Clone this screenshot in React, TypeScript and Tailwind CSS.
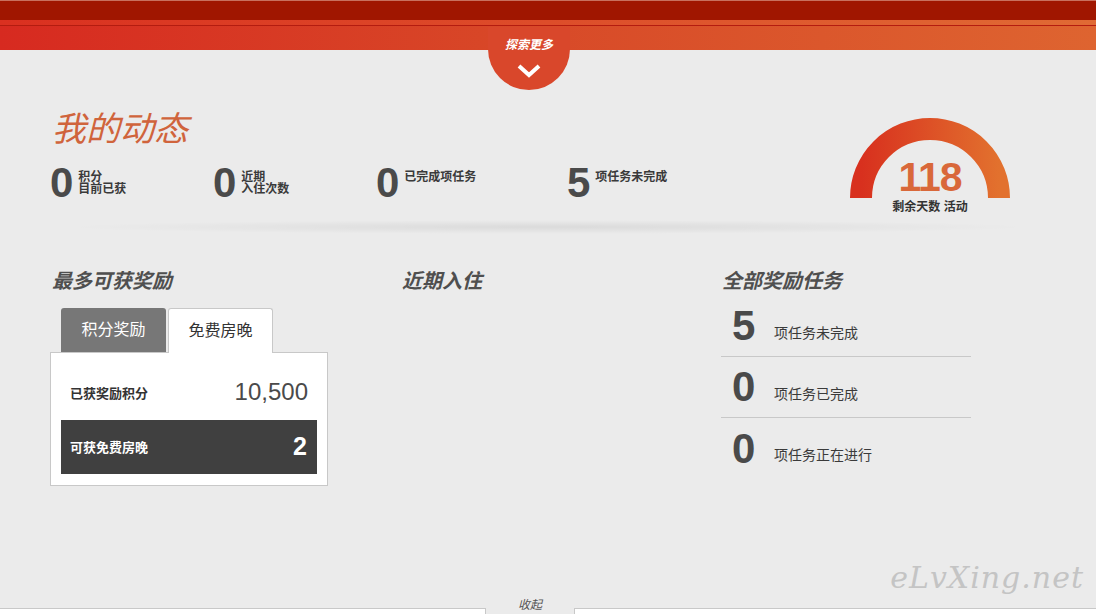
import React from "react";

const cjk = "font-['Liberation_Sans','Noto_Sans_CJK_SC',sans-serif]";

const Stat = ({ n, top, bottom, w }: { n: string; top: string; bottom?: string; w: string }) => (
  <div className={`flex items-start ${w}`}>
    <span className="text-[42px] leading-[40px] font-bold text-[#4a4a4a] tracking-[-1px]">{n}</span>
    <div className="ml-[6px] mt-[8px] text-[12px] leading-[12px] font-bold text-[#3a3a3a]">
      <div>{top}</div>
      {bottom && <div>{bottom}</div>}
    </div>
  </div>
);

const TaskRow = ({ n, label, last }: { n: string; label: string; last?: boolean }) => (
  <div className={`flex items-center h-[61px] ${last ? "" : "border-b border-[#c8c8c8]"}`}>
    <span className="w-[53px] pl-[11px] text-[42px] leading-[40px] font-bold text-[#4a4a4a]">{n}</span>
    <span className="mt-[14px] text-[14px] text-[#3a3a3a]">{label}</span>
  </div>
);

const Gauge = () => (
  <div className="relative w-[160px] h-[100px]">
    <svg width="160" height="82" viewBox="0 0 160 82">
      <defs>
        <linearGradient id="g" x1="0" y1="0" x2="1" y2="0">
          <stop offset="0" stopColor="#d8301e" />
          <stop offset="1" stopColor="#e2712e" />
        </linearGradient>
      </defs>
      <path d="M11 81 A69 69 0 0 1 149 81" fill="none" stroke="url(#g)" strokeWidth="22" />
    </svg>
    <div className="absolute left-0 right-0 top-[38px] text-center">
      <div className="text-[41px] leading-[44px] font-bold text-[#d9683a] tracking-[-1px]">118</div>
      <div className="text-[12px] leading-[14px] font-bold text-[#333] mt-[1px]">剩余天数 活动</div>
    </div>
  </div>
);

export default function App() {
  return (
    <div className={`relative w-[1096px] h-[614px] overflow-hidden bg-[#ebebeb] flex flex-col ${cjk}`}>
      {/* top bars */}
      <div className="h-[20px] bg-[#a01600] border-t border-[#c8705e]" />
      <div className="h-[30px] bg-[linear-gradient(90deg,#d72a20,#d84a28_50%,#de6430)] flex flex-col">
        <div className="h-[6px] border-b border-[#b41c10] bg-[linear-gradient(90deg,#da3020,#e06a34)]" />
      </div>
      <div className="absolute left-[488px] top-[27px] w-[82px] h-[63px] rounded-b-[41px] bg-[#d9472b] flex flex-col items-center">
        <span className="mt-[10px] text-[12px] leading-[16px] italic font-bold text-white">探索更多</span>
        <svg width="24" height="16" viewBox="0 0 24 16" className="mt-[10px]">
          <path d="M2 3 L12 12 L22 3" fill="none" stroke="#ffffff" strokeWidth="4" />
        </svg>
      </div>

      {/* my activity */}
      <div className="flex mt-[58px]">
        <div className="flex-1 pl-[50px]">
          <h1 className="text-[34px] leading-[42px] italic text-[#d0643c] pl-[2px]">我的动态</h1>
          <div className="flex mt-[13px]">
            <Stat n="0" top="积分" bottom="目前已获" w="w-[163px]" />
            <Stat n="0" top="近期" bottom="入住次数" w="w-[163px]" />
            <Stat n="0" top="已完成项任务" w="w-[191px]" />
            <Stat n="5" top="项任务未完成" w="w-[150px]" />
          </div>
        </div>
        <div className="mr-[86px] mt-[9px]">
          <Gauge />
        </div>
      </div>

      <div className="mx-[60px] mt-[3px] h-[14px] bg-[radial-gradient(ellipse_at_center,rgba(0,0,0,0.07),rgba(0,0,0,0)_70%)]" />

      {/* sections */}
      <div className="flex mt-[34px]">
        <div className="w-[352px] pl-[50px]">
          <h2 className="pl-[2px] text-[20px] leading-[26px] italic font-bold text-[#4f4f4f]">最多可获奖励</h2>
          <div className="w-[278px] mt-[14px]">
            <div className="flex pl-[11px] gap-[2px] items-end relative z-10">
              <div className="w-[105px] h-[44px] rounded-t-[3px] bg-[#777777] text-white text-[16px] flex items-center justify-center">
                积分奖励
              </div>
              <div className="w-[105px] h-[45px] rounded-t-[3px] bg-white border border-b-0 border-[#c8c8c8] text-[#333] text-[16px] flex items-center justify-center -mb-[1px]">
                免费房晚
              </div>
            </div>
            <div className="bg-white border border-[#c8c8c8] px-[10px] pb-[11px]">
              <div className="h-[67px] flex items-end justify-between pb-[14px] pl-[9px] pr-[9px]">
                <span className="text-[13px] leading-[24px] font-bold text-[#333]">已获奖励积分</span>
                <span className="text-[24px] leading-[28px] text-[#4a4a4a]">10,500</span>
              </div>
              <div className="h-[54px] bg-[#404040] flex items-center justify-between pl-[9px] pr-[10px]">
                <span className="text-[13px] font-bold text-white mt-[2px]">可获免费房晚</span>
                <span className="text-[25px] font-bold text-white">2</span>
              </div>
            </div>
          </div>
        </div>
        <div className="w-[369px] pl-[50px]">
          <h2 className="text-[20px] leading-[26px] italic font-bold text-[#4f4f4f]">近期入住</h2>
        </div>
        <div className="w-[250px]">
          <h2 className="pl-[1px] text-[20px] leading-[26px] italic font-bold text-[#4f4f4f]">全部奖励任务</h2>
          <div className="mt-[2px]">
            <TaskRow n="5" label="项任务未完成" />
            <TaskRow n="0" label="项任务已完成" />
            <TaskRow n="0" label="项任务正在进行" last />
          </div>
        </div>
      </div>

      <div className="flex-1" />
      <div className="flex items-end h-[16px]">
        <div className="w-[486px] h-[6px] bg-white border-t border-r border-[#c8c8c8]" />
        <div className="w-[88px] text-center text-[12px] leading-[14px] italic text-[#555] self-start">收起</div>
        <div className="flex-1 h-[6px] bg-white border-t border-l border-[#c8c8c8]" />
      </div>

      <div className="absolute right-[12px] bottom-[14px] text-[30px] italic text-[#c4c4c4] font-['DejaVu_Serif',serif] tracking-[1px]">
        eLvXing.net
      </div>
    </div>
  );
}
